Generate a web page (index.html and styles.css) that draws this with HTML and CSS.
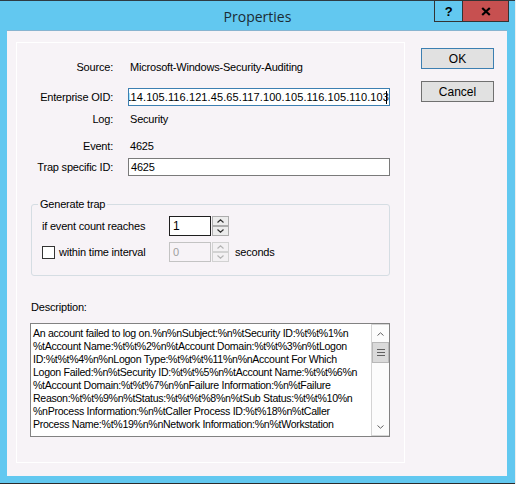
FILE: index.html
```html
<!DOCTYPE html>
<html>
<head>
<meta charset="utf-8">
<title>Properties</title>
<link rel="stylesheet" href="styles.css">
</head>
<body>
<div class="window">
  <div class="titlebar"><span class="title">Properties</span></div>
  <div class="controls">
    <div class="ctl help">?</div>
    <div class="ctl close"><svg width="10" height="9" viewBox="0 0 10 9"><path d="M1.2 1 L8.8 8 M8.8 1 L1.2 8" stroke="#000" stroke-width="2.2" fill="none"/></svg></div>
  </div>
  <div class="client">
    <div class="panel">
      <div class="row r-source"><span class="lbl">Source:</span><span class="val">Microsoft-Windows-Security-Auditing</span></div>
      <div class="row r-oid"><span class="lbl">Enterprise OID:</span><div class="edit focused"><span class="oid">114.105.116.121.45.65.117.100.105.116.105.110.103</span><span class="caret"></span></div></div>
      <div class="row r-log"><span class="lbl">Log:</span><span class="val">Security</span></div>
      <div class="row r-event"><span class="lbl">Event:</span><span class="val">4625</span></div>
      <div class="row r-trap"><span class="lbl">Trap specific ID:</span><div class="edit"><span>4625</span></div></div>

      <fieldset class="group">
        <legend>Generate trap</legend>
        <div class="grow">
          <span class="glbl">if event count reaches</span>
          <div class="spin-edit">1</div>
          <div class="spin-btns">
            <div class="sb"><svg width="7" height="4" viewBox="0 0 7 4"><path d="M0.5 3.5 L3.5 0.8 L6.5 3.5" stroke="#303030" stroke-width="1.2" fill="none"/></svg></div>
            <div class="sb"><svg width="7" height="4" viewBox="0 0 7 4"><path d="M0.5 0.5 L3.5 3.2 L6.5 0.5" stroke="#303030" stroke-width="1.2" fill="none"/></svg></div>
          </div>
        </div>
        <div class="grow grow2">
          <span class="glbl chk-wrap"><span class="chk"></span>within time interval</span>
          <div class="spin-edit disabled">0</div>
          <div class="spin-btns disabled">
            <div class="sb"><svg width="7" height="4" viewBox="0 0 7 4"><path d="M0.5 3.5 L3.5 0.8 L6.5 3.5" stroke="#b4b4b4" stroke-width="1.2" fill="none"/></svg></div>
            <div class="sb"><svg width="7" height="4" viewBox="0 0 7 4"><path d="M0.5 0.5 L3.5 3.2 L6.5 0.5" stroke="#b4b4b4" stroke-width="1.2" fill="none"/></svg></div>
          </div>
          <span class="seconds">seconds</span>
        </div>
      </fieldset>

      <div class="desc-label">Description:</div>
      <div class="desc">
        <div class="desc-text">
          <div class="desc-line">An account failed to log on.%n%nSubject:%n%tSecurity ID:%t%t%1%n</div>
          <div class="desc-line">%tAccount Name:%t%t%2%n%tAccount Domain:%t%t%3%n%tLogon</div>
          <div class="desc-line">ID:%t%t%4%n%nLogon Type:%t%t%t%11%n%nAccount For Which</div>
          <div class="desc-line">Logon Failed:%n%tSecurity ID:%t%t%5%n%tAccount Name:%t%t%6%n</div>
          <div class="desc-line">%tAccount Domain:%t%t%7%n%nFailure Information:%n%tFailure</div>
          <div class="desc-line">Reason:%t%t%9%n%tStatus:%t%t%t%8%n%tSub Status:%t%t%10%n</div>
          <div class="desc-line">%nProcess Information:%n%tCaller Process ID:%t%18%n%tCaller</div>
          <div class="desc-line">Process Name:%t%19%n%nNetwork Information:%n%tWorkstation</div>
        </div>
        <div class="scroll">
          <div class="arrow"><svg width="7" height="4" viewBox="0 0 7 4"><path d="M0.5 3.5 L3.5 0.8 L6.5 3.5" stroke="#606060" stroke-width="1" fill="none"/></svg></div>
          <div class="thumb"><svg width="8" height="7" viewBox="0 0 8 7"><path d="M0 0.5 H8 M0 3.5 H8 M0 6.5 H8" stroke="#606060" stroke-width="1"/></svg></div>
          <div class="track"></div>
          <div class="arrow"><svg width="7" height="4" viewBox="0 0 7 4"><path d="M0.5 0.5 L3.5 3.2 L6.5 0.5" stroke="#606060" stroke-width="1" fill="none"/></svg></div>
        </div>
      </div>
    </div>
    <div class="buttons">
      <div class="btn default">OK</div>
      <div class="btn">Cancel</div>
    </div>
  </div>
</div>
</body>
</html>
```

FILE: styles.css
```css
* { box-sizing: border-box; }
body {
  margin: 0;
  background: #eeeeee;
  font-family: "Liberation Sans", Arial, sans-serif;
  font-size: 11px;
  letter-spacing: -0.2px;
  color: #000;
}
.window {
  position: relative;
  width: 515px;
  height: 484px;
  background: #62c8f0;
  border-top: 1px solid #2e3b44;
  border-bottom: 1px solid #2b2b2b;
}
.titlebar {
  height: 29px;
  display: flex;
  justify-content: center;
  align-items: center;
}
.title {
  font-family: "Open Sans", sans-serif;
  font-size: 14px;
  letter-spacing: 0;
  color: #1b2b34;
  margin-top: 1px;
}
.controls {
  position: absolute;
  top: -1px;
  left: 434px;
  display: flex;
  border: 1px solid #333;
  height: 22px;
}
.ctl {
  height: 20px;
  display: flex;
  align-items: center;
  justify-content: center;
}
.help {
  width: 28px;
  border-right: 1px solid #333;
  font-weight: bold;
  font-size: 13px;
}
.close {
  width: 45px;
  background: #c75050;
}
.client {
  margin-left: 7px;
  width: 500px;
  height: 446px;
  background: #f7f3f7;
  border-top: 1px solid #88b4d0;
  padding: 11px 0 0 9px;
  display: flex;
  align-items: flex-start;
}
.panel {
  width: 389px;
  height: 421px;
  border: 1px solid #ffffff;
  padding: 0 14px 0 13px;
}
.row {
  display: flex;
  align-items: center;
  height: 18px;
}
.lbl {
  width: 83px;
  flex: none;
  text-align: right;
  margin-right: 15px;
}
.val { padding-left: 2px; }
.r-source { margin-top: 15px; }
.r-oid { margin-top: 12px; }
.r-log { margin-top: 4px; }
.r-event { margin-top: 9px; }
.r-trap { margin-top: 3px; }
.edit {
  width: 262px;
  height: 18px;
  border: 1px solid #7a7a7a;
  background: #fff;
  display: flex;
  align-items: center;
  padding-left: 2px;
  overflow: hidden;
  white-space: nowrap;
}
.edit.focused {
  border-color: #3c7fb1;
  justify-content: flex-end;
  padding-left: 0;
}
.oid { margin-right: -3px; letter-spacing: 0.1px; }
.caret {
  width: 1px;
  height: 13px;
  background: #000;
  flex: none;
  margin-right: 2px;
}
.group {
  margin: 22px 0 0 1px;
  width: 359px;
  min-inline-size: 0;
  border: 1px solid #d5dde3;
  border-radius: 3px;
  padding: 5px 0 13px 10px;
}
.group legend {
  padding: 0 2px;
  margin-left: -4px;
  line-height: 13px;
}
.grow {
  display: flex;
  align-items: center;
  height: 20px;
}
.grow2 { margin-top: 6px; }
.glbl {
  width: 127px;
  flex: none;
}
.chk-wrap {
  display: flex;
  align-items: center;
}
.chk {
  width: 13px;
  height: 13px;
  border: 1px solid #333;
  background: #fff;
  margin-right: 4px;
  flex: none;
}
.spin-edit {
  width: 42px;
  height: 20px;
  border: 1px solid #1e1e1e;
  background: #fff;
  padding-left: 3px;
  display: flex;
  align-items: center;
  font-size: 12px;
}
.spin-edit.disabled {
  border-color: #c3c3c3;
  background: #f7f3f7;
  color: #a0a0a0;
  font-size: 11px;
}
.spin-btns {
  width: 17px;
  height: 20px;
  margin-left: 1px;
  display: flex;
  flex-direction: column;
}
.sb {
  height: 10px;
  border: 1px solid #adadad;
  background: #ececec;
  display: flex;
  align-items: center;
  justify-content: center;
}
.spin-btns.disabled .sb {
  border-color: #d2d2d2;
  background: #f3f1f3;
}
.seconds { margin-left: 6px; }
.desc-label {
  margin-top: 25px;
  height: 13px;
  line-height: 13px;
  padding-left: 1px;
}
.desc {
  margin-top: 9px;
  width: 360px;
  height: 114px;
  border: 1px solid #828282;
  background: #fff;
  display: flex;
}
.desc-text {
  flex: 1;
  min-width: 0;
  padding: 3px 0 0 2px;
  line-height: 13px;
  overflow: hidden;
  font-size: 10.6px;
  letter-spacing: -0.3px;
}
.desc-line { white-space: nowrap; }
.scroll {
  width: 18px;
  flex: none;
  border: 1px solid #d4d4d4;
  border-right: none;
  background: #fcfcfc;
  display: flex;
  flex-direction: column;
}
.arrow {
  height: 17px;
  display: flex;
  align-items: center;
  justify-content: center;
}
.thumb {
  height: 21px;
  background: #dadada;
  border: 1px solid #b8b8b8;
  display: flex;
  align-items: center;
  justify-content: center;
}
.track { flex: 1; }
.buttons {
  margin-left: 16px;
  margin-top: 6px;
  display: flex;
  flex-direction: column;
  gap: 12px;
}
.btn {
  width: 73px;
  height: 21px;
  background: #e1e1e1;
  border: 1px solid #707070;
  display: flex;
  align-items: center;
  justify-content: center;
  font-size: 12px;
  letter-spacing: 0;
}
.btn.default { border-color: #3c7fb1; }
```
